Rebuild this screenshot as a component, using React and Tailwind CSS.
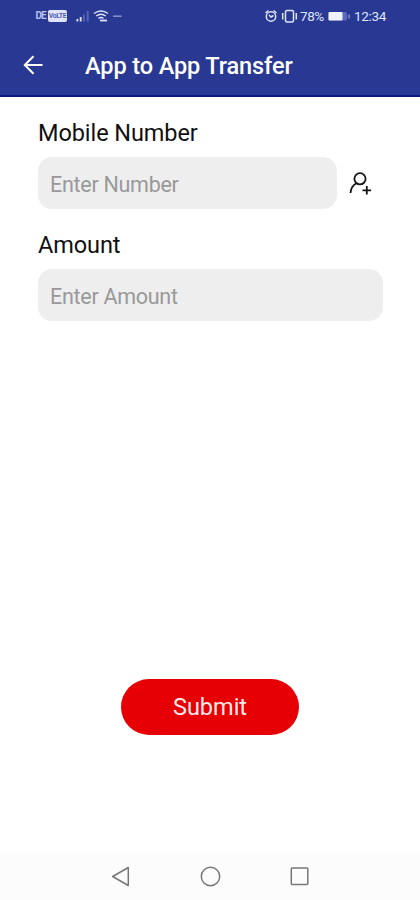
function LeftStatus() {
  return (
    <div className="flex h-[16px] w-[88px] items-center leading-none">
      <span className="w-[13px] pl-[0.500px] text-[10px] font-bold tracking-[-1px] text-[#b9c2ef]">DE</span>
      <span className="mr-[8px] flex h-[12px] w-[19px] items-center justify-center rounded-[2px] bg-[#dfe4fb] text-[7px] font-bold tracking-[-0.400px] text-[#5661ae]">
        VoLTE
      </span>
      <svg width="48" height="16" viewBox="75 8 48 16" fill="none" aria-hidden="true">
        <path d="M76.500 19h1.800v2.500h-1.800zM79.800 17h1.800v4.500h-1.800z" fill="#dfe4fb" />
        <path d="M83 14.500h1.800v7h-1.800zM86.700 11h2v10.500h-2z" fill="#5664b5" />
        <g stroke="#dfe4fb" strokeWidth="1.500">
          <path d="M94 13.500q7-5 14 0M96.300 16q4.700-3.500 9.400 0M98.500 18.500q2.500-1.800 5 0" />
          <path d="M100 20.500h7" strokeWidth="1.800" />
        </g>
        <path d="M113 16.200h8.500" stroke="#8995d3" strokeWidth="1.500" />
      </svg>
    </div>
  );
}

function AlarmAndVibrate() {
  return (
    <svg width="33" height="16" viewBox="265 8 33 16" fill="none" stroke="#dfe4fb" strokeWidth="1.500" aria-hidden="true">
      <circle cx="271" cy="16.500" r="4.700" />
      <path d="M265.500 13l3-2.500M276.500 13l-3-2.500M269 15l2 2 2.500-1.500" />
      <rect x="285.500" y="10.500" width="8" height="11.500" rx="1.500" />
      <path d="M282.700 13v6.500M296.300 13v6.500" />
    </svg>
  );
}

function Battery() {
  return (
    <svg width="23" height="12" viewBox="0 0 23 12" aria-hidden="true">
      <rect x="0.500" y="2" width="18.500" height="8.500" rx="1.500" fill="#5c69b8" />
      <rect x="0.500" y="2" width="14" height="8.500" rx="1" fill="#f1f2ff" />
      <path d="M21 4.500v4" stroke="#8995d3" strokeWidth="1.500" />
    </svg>
  );
}

function Field({ label, placeholder, children }) {
  return (
    <section className="h-[112px]">
      <label className="block h-[40px] pt-[2px] text-[23.500px] leading-[28px] tracking-[-0.080px] text-[#111]">{label}</label>
      <div className="flex items-center">
        <input
          aria-label={label}
          placeholder={placeholder}
          className="h-[52px] min-w-0 flex-1 rounded-[14px] bg-[#eeeeee] px-[12px] pt-[2px] text-[21.500px] tracking-[-0.280px] text-black outline-none placeholder:text-[#999]"
        />
        {children}
      </div>
    </section>
  );
}

export default function App() {
  return (
    <div className="flex h-[900px] w-[420px] flex-col overflow-hidden bg-white font-['Roboto',sans-serif]">
      <header className="h-[97px] border-b-2 border-[#0b1b87] bg-[#293993] text-white">
        <div className="flex h-[32px] items-center pl-[35px]">
          <LeftStatus />
          <div className="ml-[142px] flex items-center text-[13.500px] leading-none text-[#dfe4fb]">
            <AlarmAndVibrate />
            <span className="ml-[2px] w-[28px] pt-px tracking-[-0.400px]">78%</span>
            <Battery />
            <span className="ml-[3px] pt-px tracking-[-0.300px]">12:34</span>
          </div>
        </div>
        <div className="flex h-[66px] items-center pl-[23px]">
          <svg width="20" height="20" viewBox="0 0 20 20" fill="none" stroke="currentColor" strokeWidth="2" aria-label="Back">
            <path d="M19.500 10H2M10.500 1.300L1.800 10l8.700 8.700" />
          </svg>
          <h1 className="ml-[42px] whitespace-nowrap pt-[4px] text-[23.500px] font-medium tracking-[-0.100px]">App to App Transfer</h1>
        </div>
      </header>
      <main className="flex flex-1 flex-col pl-[38px] pr-[37px] pt-[20px]">
        <Field label="Mobile Number" placeholder="Enter Number">
          <button aria-label="Choose contact" className="ml-[11px] mr-[11px] flex h-[24px] w-[24px]">
            <svg width="24" height="24" viewBox="348 171 24 24" fill="none" stroke="#151515" strokeWidth="1.800">
              <circle cx="360" cy="178.800" r="5.600" />
              <path d="M356.500 183.200q-5.500 3-6 9.800M366.800 186v8.500M362.500 190.300h8.600" />
            </svg>
          </button>
        </Field>
        <Field label="Amount" placeholder="Enter Amount" />
        <button className="mr-px mt-[338px] h-[56px] w-[178px] self-center rounded-full bg-[#e60005] pt-[2px] text-[23.500px] text-[#ffebeb]">
          Submit
        </button>
      </main>
      <nav className="flex h-[48px] items-center bg-[#fcfcfc] pl-[110px]">
        <svg width="201" height="24" viewBox="110 864 201 24" fill="none" stroke="#777" strokeWidth="1.500" aria-hidden="true">
          <path d="M128.300 867.500v18L112.700 876.500z" strokeLinejoin="round" />
          <circle cx="210.500" cy="876.500" r="9.200" />
          <rect x="291.300" y="868" width="16.500" height="16.500" rx="1" />
        </svg>
      </nav>
    </div>
  );
}
